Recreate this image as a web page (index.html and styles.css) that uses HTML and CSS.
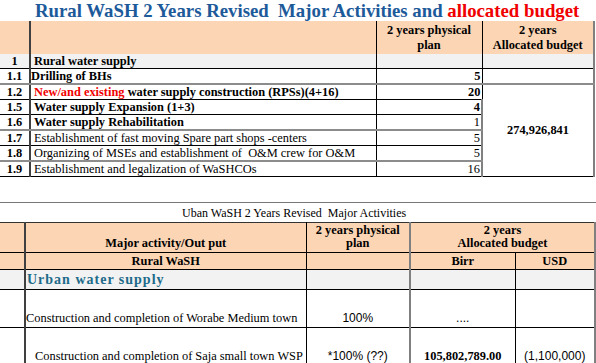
FILE: index.html
```html
<!DOCTYPE html>
<html>
<head>
<meta charset="utf-8">
<link rel="stylesheet" href="styles.css">
</head>
<body>
<div class="title">Rural WaSH 2 Years Revised&nbsp; Major Activities and <span class="red">allocated budget</span></div>
<table class="t1">
  <colgroup><col class="c1"><col class="c2"><col class="c3"><col class="c4"></colgroup>
  <tr class="hdr">
    <td class="num"></td><td></td>
    <td class="ctr b">2 years physical<br>plan</td>
    <td class="ctr b">2 years<br>Allocated budget</td>
  </tr>
  <tr class="gray row ld">
    <td class="num b">1</td><td class="b pl">Rural water supply</td><td></td><td></td>
  </tr>
  <tr class="row lg">
    <td class="num b">1.1</td><td class="b">Drilling of BHs</td><td class="rt b">5</td><td></td>
  </tr>
  <tr class="row ld">
    <td class="num b">1.2</td><td class="b pl"><span class="red">New/and existing</span> water supply construction (RPSs)(4+16)</td><td class="rt b">20</td>
    <td class="ctr b budget" rowspan="7">274,926,841</td>
  </tr>
  <tr class="row ld">
    <td class="num b">1.5</td><td class="b pl">Water supply Expansion (1+3)</td><td class="rt b">4</td>
  </tr>
  <tr class="row lg">
    <td class="num b">1.6</td><td class="b pl">Water supply Rehabilitation</td><td class="rt">1</td>
  </tr>
  <tr class="row ld">
    <td class="num b">1.7</td><td class="pl">Establishment of fast moving Spare part shops -centers</td><td class="rt">5</td>
  </tr>
  <tr class="row lg">
    <td class="num b">1.8</td><td class="pl">Organizing of MSEs and establishment of&nbsp; O&amp;M crew for O&amp;M</td><td class="rt">5</td>
  </tr>
  <tr class="row ld">
    <td class="num b">1.9</td><td class="pl">Establishment and legalization of WaSHCOs</td><td class="rt">16</td>
  </tr>
</table>

<div class="urban">
  <div class="caption">Uban WaSH 2 Years Revised&nbsp; Major Activities</div>
  <table class="t2">
    <colgroup><col class="d1"><col class="d2"><col class="d3"><col class="d4"><col class="d5"></colgroup>
    <tr class="hdr2">
      <td class="first"></td>
      <td class="ctr b bot">Major activity/Out put</td>
      <td class="ctr b top">2 years physical<br>plan</td>
      <td class="ctr b top" colspan="2">2 years<br>Allocated budget</td>
    </tr>
    <tr class="hdr3">
      <td class="first"></td>
      <td class="ctr b">Rural WaSH</td>
      <td></td>
      <td class="ctr b">Birr</td>
      <td class="ctr b">USD</td>
    </tr>
    <tr class="gray uws">
      <td class="first"></td>
      <td class="teal">Urban water supply</td>
      <td></td><td></td><td></td>
    </tr>
    <tr class="tall">
      <td class="first"></td>
      <td class="bot">Construction and completion of Worabe Medium town</td>
      <td class="ctr bot sans">100%</td>
      <td class="ctr bot sans">....</td>
      <td></td>
    </tr>
    <tr class="tall">
      <td class="first"></td>
      <td class="bot ind">Construction and completion of Saja small town WSP</td>
      <td class="ctr bot sans">*100% (??)</td>
      <td class="ctr bot b">105,802,789.00</td>
      <td class="ctr bot sans">(1,100,000)</td>
    </tr>
  </table>
</div>
</body>
</html>
```

FILE: styles.css
```css
html, body {
  margin: 0;
  padding: 0;
  background: #ffffff;
}
body {
  width: 596px;
  height: 363px;
  overflow: hidden;
  font-family: "Liberation Serif", "Times New Roman", serif;
  font-size: 12.4px;
  color: #000;
}
.title {
  height: 21px;
  line-height: 21px;
  padding-left: 35px;
  font-size: 18.8px;
  font-weight: bold;
  color: #1d5a9a;
  white-space: nowrap;
}
.red { color: #f00000; }
.b { font-weight: bold; }
.ctr { text-align: center; }
.rt { text-align: right; padding-right: 1px; }
.pl { padding-left: 3px; }

table {
  border-collapse: collapse;
  table-layout: fixed;
}
td {
  padding: 0;
  line-height: 13px;
  white-space: nowrap;
  overflow: hidden;
}
.t1 { width: 594px; }
.c1 { width: 30px; }
.c2 { width: 346px; }
.c3 { width: 106px; }
.c4 { width: 112px; }
.t1 td { border-right: 1px solid #000; }
.t1 td:first-child { border-right: 2px solid #404040; }
.t1 td:last-child, .t1 .budget { border-right: 2px solid #808080; }
.t1 .hdr td { height: 33px; background: #fcd5b4; vertical-align: middle; line-height: 15px; }
.num { text-align: center; }
.gray td { background: #f2f2f2; }
.row td { height: 14px; vertical-align: bottom; }
.t1 .ld td { border-bottom: 1px solid #000; }
.t1 .lg td { border-bottom: 2px solid #8c8c8c; }
.t1 .budget { vertical-align: middle; border-bottom: 1px solid #000; }

.urban {
  margin-top: 25px;
  border-top: 1px solid #777;
}
.caption {
  height: 19px;
  line-height: 20px;
  font-size: 12px;
  padding-left: 182px;
  white-space: nowrap;
}
.t2 { width: 595px; }
.d1 { width: 25px; }
.d2 { width: 281px; }
.d3 { width: 104px; }
.d4 { width: 105px; }
.d5 { width: 80px; }
.t2 td { border: 1px solid #000; border-left: none; }
.t2 td.first { border-right: 2px solid #404040; }
.t2 td:nth-child(3) { border-right: 2px solid #808080; }
.t2 td:last-child { border-right: 2px solid #808080; }
.t2 tr:first-child td { border-top: 1px solid #333; }
.hdr2 td { height: 27px; background: #fcd5b4; line-height: 13px; }
.hdr3 td { height: 16px; background: #fcd5b4; }
.top { vertical-align: top; padding-top: 1px; }
.bot { vertical-align: bottom; padding-bottom: 2px; }
.uws td { height: 19px; border-bottom: 1px solid #000; }
.teal {
  color: #1d6b8a;
  font-weight: bold;
  font-size: 14px;
  letter-spacing: 1px;
  padding-left: 1px;
}
.tall td { height: 35px; }
.ind { padding-left: 9px; }
.sans { font-family: "Liberation Sans", Arial, sans-serif; font-size: 12px; }
```
